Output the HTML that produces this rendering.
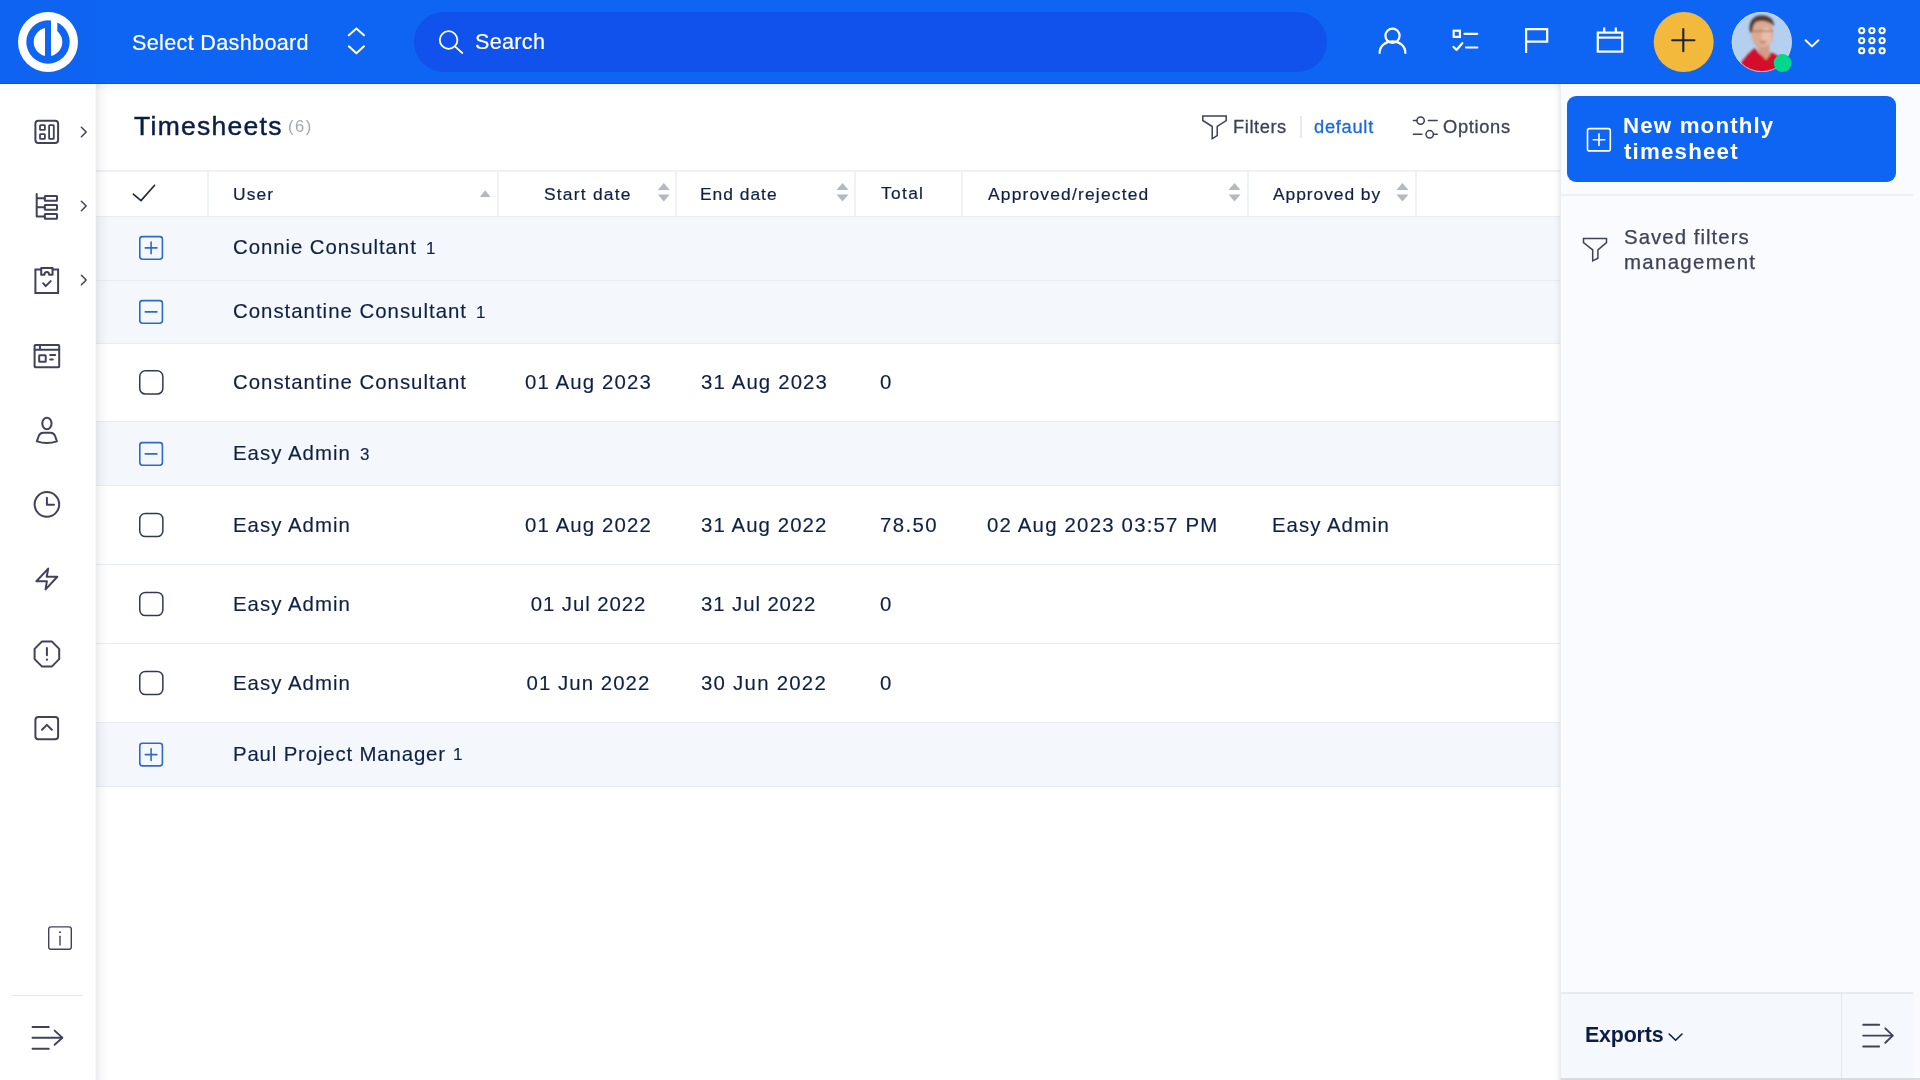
<!DOCTYPE html>
<html lang="en">
<head>
<meta charset="utf-8">
<title>Timesheets</title>
<style>
*{box-sizing:border-box;margin:0;padding:0}
html,body{width:1920px;height:1080px;overflow:hidden;background:#fff}
body{font-family:"Liberation Sans",sans-serif;color:#0e2046;position:relative}
.abs{position:absolute}
.t{position:absolute;white-space:nowrap;line-height:1;will-change:transform}
svg{position:absolute;overflow:visible}
/* header */
#top{position:absolute;left:0;top:0;width:1920px;height:84px;background:#0f65f3}
#logoarea{position:absolute;left:0;top:0;width:96px;height:84px;background:#0e63f1}
#search{position:absolute;left:414px;top:12px;width:913px;height:60px;border-radius:30px;background:#1151ec}
/* sidebar */
#side{position:absolute;left:0;top:84px;width:96px;height:996px;background:#fff}
#sideshadow{z-index:5;position:absolute;left:95px;top:84px;width:13px;height:996px;background:linear-gradient(to right,rgba(10,15,30,0),rgba(10,15,30,.075) 12%,rgba(10,15,30,.03) 45%,rgba(10,15,30,0))}
#topshadow{z-index:5;position:absolute;left:96px;top:84px;width:1464px;height:8px;background:linear-gradient(to bottom,rgba(20,30,60,.05),rgba(20,30,60,0))}
/* table */
.hl{position:absolute;left:96px;width:1464px;background:#e9edf3}
.vl{position:absolute;top:172px;height:44px;width:2px;background:#eff1f5}
.grow{position:absolute;left:96px;width:1464px;height:63px;background:#f4f8fd}
.gbox{position:absolute;left:139px;width:24px;height:24px;border:2px solid #2f73e6;border-radius:4px}
.gbox:before{content:"";position:absolute;left:4px;top:9px;width:12px;height:2px;background:#2f73e6}
.gbox.plus:after{content:"";position:absolute;left:9px;top:4px;width:2px;height:12px;background:#2f73e6}
.cbox{position:absolute;left:139px;width:24px;height:24px;border:2px solid #2c3853;border-radius:6px;background:#fff}
.cell{font-size:20.4px;letter-spacing:1.0px;color:#0e2046;-webkit-text-stroke:.15px #0e2046}
.cnt{font-size:17px;color:#0e2046;-webkit-text-stroke:.15px #0e2046}
.th{font-size:17px;letter-spacing:1.1px;color:#0e2046}
/* right panel */
#right{position:absolute;left:1561px;top:84px;width:359px;height:996px;background:#fafbfe}
#rightshadow{z-index:5;position:absolute;left:1553px;top:84px;width:8px;height:996px;background:linear-gradient(to left,rgba(20,30,60,.09),rgba(20,30,60,.02) 50%,rgba(20,30,60,0))}
#newbtn{position:absolute;left:1567px;top:96px;width:329px;height:86px;border-radius:9px;background:#0f65f3}
#exp{position:absolute;left:1561px;top:993px;width:353px;height:85px;background:#f5f8fd}
</style>
</head>
<body>
<!-- ===== HEADER ===== -->
<div id="top"></div>
<div id="logoarea"></div>
<div class="abs" style="left:0;top:83px;width:1920px;height:1px;background:rgba(5,30,150,.22)"></div>
<div id="search"></div>
<svg id="hsvg" width="1920" height="84" viewBox="0 0 1920 84" style="left:0;top:0">
<!-- logo -->
<circle cx="48" cy="42" r="30" fill="#fff"/>
<circle cx="48" cy="42" r="21.7" fill="#0f65f3"/>
<circle cx="48" cy="42" r="14.3" fill="#fff"/>
<rect x="45" y="21" width="6" height="42" fill="#0f65f3"/>
<rect x="51" y="19" width="6.3" height="12.5" fill="#fff"/>
<!-- dashboard chevrons -->
<g fill="none" stroke="#fff" stroke-width="2" stroke-linecap="round" stroke-linejoin="round">
<path d="M348.8 35.3 L356.4 28.6 L364 35.3"/>
<path d="M348.8 46.3 L356.4 53.2 L364 46.3"/>
<!-- search icon -->
<circle cx="448.6" cy="40" r="8.8" stroke-width="1.8"/>
<path d="M455.2 46.6 L462.3 53" stroke-width="1.8"/>
<!-- user -->
<circle cx="1392.5" cy="35.8" r="7.1" stroke-width="2.2"/>
<path d="M1379.6 53 C1379.6 37.5 1405.4 37.5 1405.4 53" stroke-width="2.2"/>
<!-- task list -->
<g stroke-width="2.2">
<rect x="1453.7" y="30.7" width="6.2" height="6.2" stroke-linejoin="miter"/>
<path d="M1464.5 33.8 H1477.3"/>
<path d="M1453.5 47 L1456.7 49.8 L1462.3 43.2"/>
<path d="M1466 47.5 H1477.3"/>
</g>
<!-- flag -->
<path d="M1526.1 53 V29.1 H1547.2 V41.6 H1526.1" stroke-width="2.2" stroke-linejoin="miter" stroke-linecap="butt"/>
<!-- calendar -->
<g stroke-width="2.2" stroke-linejoin="miter" stroke-linecap="butt">
<rect x="1597.8" y="32.6" width="24.4" height="19"/>
<path d="M1597.8 37.6 H1622.2"/>
<path d="M1604.2 27.5 V32.6 M1615.8 27.5 V32.6"/>
</g>
<!-- user chevron -->
<path d="M1805.6 40.2 L1812 46.4 L1818.4 40.2" stroke-width="2"/>
</g>
<!-- plus button -->
<circle cx="1683.7" cy="42" r="30" fill="#f3b93c"/>
<path d="M1672.2 40.2 H1694.4 M1683.3 29.1 V51.3" stroke="#1c2433" stroke-width="2.1" stroke-linecap="round" fill="none"/>
<!-- avatar -->
<defs>
<clipPath id="avc"><circle cx="1761.8" cy="42" r="30"/></clipPath>
<filter id="bl" x="-20%" y="-20%" width="140%" height="140%"><feGaussianBlur stdDeviation="1.1"/></filter>
</defs>
<g clip-path="url(#avc)">
<rect x="1731" y="11" width="62" height="62" fill="#b5cfee"/>
<g filter="url(#bl)">
<path d="M1738 70 C1741 60 1749 53 1754.5 48 L1760 54 L1766 58 L1771 52.5 C1776 54 1781 57 1786 63 L1786 78 L1738 78 Z" fill="#d3112b"/>
<path d="M1756 44 L1769 45 L1770 55 L1766 60 L1759 52 Z" fill="#d49b86"/>
<ellipse cx="1762.2" cy="33.4" rx="11" ry="14.6" fill="#dba892"/>
<ellipse cx="1766.5" cy="36" rx="5" ry="9" fill="#ecc4b3" opacity=".75"/>
<path d="M1750 32.5 C1747.5 21 1754 15 1762 15.2 C1770 15.4 1774.3 20 1774.2 26.5 C1770 21.5 1762 20 1756.5 21.8 C1753.2 24 1752.6 28 1752.2 32.5 Z" fill="#4f3e37"/>
<path d="M1753 31.2 H1773" stroke="#8a6253" stroke-width="1.2" fill="none" opacity=".8"/>
<ellipse cx="1763.5" cy="41.8" rx="3.4" ry="1.1" fill="#c9796d"/>
</g>
</g>
<circle cx="1761.8" cy="42" r="29.6" fill="none" stroke="#c9ddf6" stroke-width=".8"/>
<circle cx="1782.6" cy="63" r="8.9" fill="#04d78c"/>
<!-- app grid -->
<g fill="none" stroke="#fff" stroke-width="2.1">
<circle cx="1861.7" cy="30.6" r="2.6"/><circle cx="1871.9" cy="30.6" r="2.6"/><circle cx="1882.1" cy="30.6" r="2.6"/>
<circle cx="1861.7" cy="40.6" r="2.6"/><circle cx="1871.9" cy="40.6" r="2.6"/><circle cx="1882.1" cy="40.6" r="2.6"/>
<circle cx="1861.7" cy="50.7" r="2.6"/><circle cx="1871.9" cy="50.7" r="2.6"/><circle cx="1882.1" cy="50.7" r="2.6"/>
</g>
</svg>
<div class="t" style="left:132.3px;top:31.72px;font-size:21.6px;letter-spacing:0.33px;color:#fff;-webkit-text-stroke:.2px #fff">Select Dashboard</div>
<div class="t" style="left:474.5px;top:31.32px;font-size:21.6px;letter-spacing:0.3px;color:#fff;-webkit-text-stroke:.2px #fff">Search</div>
<!-- ===== SIDEBAR ===== -->
<div id="side"></div>
<div id="sideshadow"></div>
<div id="topshadow"></div>
<svg id="ssvg" width="96" height="996" viewBox="0 84 96 996" style="left:0;top:84px">
<g fill="none" stroke="#41415c" stroke-width="2" stroke-linecap="round" stroke-linejoin="round">
<!-- dashboard -->
<rect x="35.4" y="120.8" width="22.7" height="22.2" rx="3"/>
<rect x="40" y="125.1" width="4.9" height="4.7" rx=".6" stroke-width="1.8"/>
<rect x="40" y="134.2" width="4.9" height="4.7" rx=".6" stroke-width="1.8"/>
<rect x="49.1" y="125.1" width="4.7" height="13.8" rx=".6" stroke-width="1.8"/>
<!-- tree -->
<path d="M36.7 194.1 V216.4 H44.8 M36.7 198.2 H44.8 M36.7 207.3 H44.8"/>
<rect x="44.8" y="196.1" width="12.2" height="4.7" rx=".5"/>
<rect x="44.8" y="205" width="12.2" height="4.7" rx=".5"/>
<rect x="44.8" y="214.1" width="12.2" height="4.7" rx=".5"/>
<!-- clipboard -->
<path d="M41.2 269.6 H35.4 V293 H58.1 V269.6 H52.6" stroke-linejoin="miter"/>
<path d="M41.2 274.8 V267.9 H52.6 V274.8 H49.3 C49 270.9 44.6 270.9 44.3 274.8 Z"/>
<path d="M43.1 283.2 L45.7 286.1 L50.7 281.1"/>
<!-- window -->
<rect x="34.6" y="345" width="24.6" height="22.2" rx=".8"/>
<path d="M34.6 349.8 H59.2 M40 345 V349.8" stroke-width="1.9"/>
<rect x="39.2" y="355.2" width="6.5" height="6.5" rx=".5"/>
<path d="M50.2 355.1 H55.2 M50.2 359.6 H52.8"/>
<!-- user -->
<ellipse cx="46.9" cy="423.5" rx="4.6" ry="5.7"/>
<path d="M36.9 441.4 L38.7 436 Q39.9 432.8 43.4 432.8 L50.4 432.8 Q53.9 432.8 55.1 436 L56.9 441.4 Q46.9 444.6 36.9 441.4 Z"/>
<!-- clock -->
<circle cx="46.9" cy="504.4" r="12.3"/>
<path d="M46.9 497.8 V504.7 H54"/>
<!-- bolt -->
<path d="M48.2 568.6 L36.4 581.2 L46.9 581.2 L45.6 589.4 L57.3 576.8 L46.7 576.7 Z"/>
<!-- octagon alert -->
<path d="M41.8 641.6 H52 L59.2 648.9 V659.1 L52 666.4 H41.8 L34.6 659.1 V648.9 Z"/>
<path d="M46.9 648 V655.3"/>
<circle cx="46.9" cy="659.7" r="1.1" fill="#41415c" stroke="none"/>
<!-- caret square -->
<rect x="35.4" y="717" width="22.7" height="22.2" rx="3"/>
<path d="M42 729.8 L46.9 724.9 L51.8 729.8"/>
<!-- chevrons -->
<g stroke-width="1.5">
<path d="M81.4 127.2 L86.2 132 L81.4 136.8"/>
<path d="M81.4 201.2 L86.2 206 L81.4 210.8"/>
<path d="M81.4 275.2 L86.2 280 L81.4 284.8"/>
</g>
<!-- info -->
<rect x="48.7" y="926.9" width="22.6" height="22.4" rx="2.2" stroke-width="1.4"/>
<path d="M60 936.3 V945" stroke-width="1.4"/>
<circle cx="60" cy="932.2" r="1" fill="#41415c" stroke="none"/>
<!-- collapse arrow -->
<g stroke-width="1.85">
<path d="M32.5 1027 H48.8 M32.5 1037.7 H62 M32.5 1048.7 H48.8"/>
<path d="M54.6 1030.6 L62.4 1037.7 L54.6 1044.8"/>
</g>
</g>
<rect x="12" y="995" width="71" height="1" fill="#e4e7ee"/>
</svg>
<!-- ===== CONTENT ===== -->
<div class="t" style="left:133.7px;top:113.02px;font-size:26.5px;letter-spacing:1.28px;color:#0b1d44;-webkit-text-stroke:.45px #0b1d44">Timesheets</div>
<div class="t" style="left:288px;top:118.33px;font-size:16.5px;letter-spacing:1.5px;color:#a3a8b6">(6)</div>
<div class="t" style="left:1232.75px;top:117.61px;font-size:18.3px;letter-spacing:0.58px;color:#3d4259;-webkit-text-stroke:.3px #3d4259">Filters</div>
<div class="abs" style="left:1300px;top:116px;width:2px;height:22px;background:#e9e9ec"></div>
<div class="t" style="left:1314.2px;top:117.61px;font-size:18.3px;letter-spacing:0.72px;color:#1b68dd;-webkit-text-stroke:.3px #1b68dd">default</div>
<div class="t" style="left:1443.4px;top:117.61px;font-size:18.3px;letter-spacing:0.67px;color:#3d4259;-webkit-text-stroke:.3px #3d4259">Options</div>
<div class="hl" style="top:170px;height:2px;background:#eef0f5"></div>
<div class="hl" style="top:216px;height:1px"></div>
<div class="vl" style="left:207px"></div>
<div class="vl" style="left:496.5px"></div>
<div class="vl" style="left:675px"></div>
<div class="vl" style="left:854px"></div>
<div class="vl" style="left:960.5px"></div>
<div class="vl" style="left:1246.5px"></div>
<div class="vl" style="left:1414.5px"></div>
<div class="grow" style="top:217px"></div>
<div class="grow" style="top:281px;height:62px"></div>
<div class="grow" style="top:422px"></div>
<div class="grow" style="top:723px"></div>
<div class="hl" style="top:280px;height:1px"></div>
<div class="hl" style="top:343px;height:1px"></div>
<div class="hl" style="top:421px;height:1px"></div>
<div class="hl" style="top:485px;height:1px"></div>
<div class="hl" style="top:564px;height:1px"></div>
<div class="hl" style="top:643px;height:1px"></div>
<div class="hl" style="top:722px;height:1px"></div>
<div class="hl" style="top:786px;height:1px"></div>
<div class="t th" style="left:232.5px;top:185.77px;letter-spacing:1.08px;-webkit-text-stroke:.2px #0e2046;font-size:17.4px">User</div>
<div class="t th" style="left:543.5px;top:185.77px;letter-spacing:1.22px;-webkit-text-stroke:.2px #0e2046;font-size:17.4px">Start date</div>
<div class="t th" style="left:700px;top:185.77px;letter-spacing:1.0px;-webkit-text-stroke:.2px #0e2046;font-size:17.4px">End date</div>
<div class="t th" style="left:880.75px;top:185.27px;letter-spacing:1.31px;-webkit-text-stroke:.2px #0e2046;font-size:17.4px">Total</div>
<div class="t th" style="left:987.5px;top:185.77px;letter-spacing:1.19px;-webkit-text-stroke:.2px #0e2046;font-size:17.4px">Approved/rejected</div>
<div class="t th" style="left:1272.6px;top:185.77px;letter-spacing:0.95px;-webkit-text-stroke:.2px #0e2046;font-size:17.4px">Approved by</div>

<div class="t cell" style="left:232.8px;top:237.27px;letter-spacing:0.94px">Connie Consultant</div><div class="t cnt" style="left:426.1px;top:239.81px">1</div>

<div class="t cell" style="left:232.8px;top:301.07px;letter-spacing:1.0px">Constantine Consultant</div><div class="t cnt" style="left:475.9px;top:303.61px">1</div>

<div class="t cell" style="left:232.8px;top:443.07px;letter-spacing:1.02px">Easy Admin</div><div class="t cnt" style="left:359.7px;top:445.61px">3</div>

<div class="t cell" style="left:232.8px;top:743.87px;letter-spacing:0.84px">Paul Project Manager</div><div class="t cnt" style="left:453.1px;top:746.41px">1</div>

<div class="t cell" style="left:232.8px;top:372.37px;letter-spacing:1.0px">Constantine Consultant</div>
<div class="t cell" style="left:498.5px;width:179px;text-align:center;top:372.37px;letter-spacing:1.14px">01 Aug 2023</div>
<div class="t cell" style="left:701.3px;top:372.37px;letter-spacing:1.14px">31 Aug 2023</div>
<div class="t cell" style="left:879.5px;top:372.37px">0</div>

<div class="t cell" style="left:232.8px;top:514.97px;letter-spacing:1.02px">Easy Admin</div>
<div class="t cell" style="left:498.5px;width:179px;text-align:center;top:514.97px;letter-spacing:1.12px">01 Aug 2022</div>
<div class="t cell" style="left:701.3px;top:514.97px;letter-spacing:1.08px">31 Aug 2022</div>
<div class="t cell" style="left:879.5px;top:514.97px;letter-spacing:1.4px">78.50</div>
<div class="t cell" style="left:986.6px;top:514.97px;letter-spacing:1.2px">02 Aug 2023 03:57 PM</div>
<div class="t cell" style="left:1271.5px;top:514.97px;letter-spacing:1.02px">Easy Admin</div>

<div class="t cell" style="left:232.8px;top:593.97px;letter-spacing:1.02px">Easy Admin</div>
<div class="t cell" style="left:498.5px;width:179px;text-align:center;top:593.97px;letter-spacing:0.9px">01 Jul 2022</div>
<div class="t cell" style="left:701.3px;top:593.97px;letter-spacing:0.9px">31 Jul 2022</div>
<div class="t cell" style="left:879.5px;top:593.97px">0</div>

<div class="t cell" style="left:232.8px;top:672.97px;letter-spacing:1.02px">Easy Admin</div>
<div class="t cell" style="left:498.5px;width:179px;text-align:center;top:672.97px;letter-spacing:1.05px">01 Jun 2022</div>
<div class="t cell" style="left:701.3px;top:672.97px;letter-spacing:1.25px">30 Jun 2022</div>
<div class="t cell" style="left:879.5px;top:672.97px">0</div>
<svg id="csvg" width="1464" height="996" viewBox="96 84 1464 996" style="left:96px;top:84px">
<g fill="none" stroke="#3d4259" stroke-width="1.5" stroke-linejoin="miter">
<path d="M1202.8 115.9 H1226.2 V120.5 L1217.2 126.5 V135.6 L1212.2 138.6 V126.5 L1202.8 120.5 Z"/>
<circle cx="1420.6" cy="120.6" r="3.7"/><path d="M1413.4 120.6 H1416.9 M1428.4 120.6 H1437.2" stroke-linecap="round"/>
<circle cx="1429.7" cy="134.3" r="3.7"/><path d="M1413.4 134.3 H1421.9 M1433.4 134.3 H1437.2" stroke-linecap="round"/>
</g>
<g fill="none" stroke="#2f69cc" stroke-width="1.6" stroke-linecap="round"><rect x="139.80" y="236.60" width="22.6" height="22.6" rx="2.6"/><path d="M145.30 247.90 H156.90 M151.10 242.10 V253.70"/><rect x="139.80" y="300.60" width="22.6" height="22.6" rx="2.6"/><path d="M145.30 311.90 H156.90"/><rect x="139.80" y="442.60" width="22.6" height="22.6" rx="2.6"/><path d="M145.30 453.90 H156.90"/><rect x="139.80" y="743.30" width="22.6" height="22.6" rx="2.6"/><path d="M145.30 754.60 H156.90 M151.10 748.80 V760.40"/></g>
<g fill="#fff" stroke="#2f3a52" stroke-width="1.5"><rect x="139.75" y="370.80" width="23.1" height="23.2" rx="5.6"/><rect x="139.75" y="513.40" width="23.1" height="23.2" rx="5.6"/><rect x="139.75" y="592.40" width="23.1" height="23.2" rx="5.6"/><rect x="139.75" y="671.40" width="23.1" height="23.2" rx="5.6"/></g>
<path d="M133.3 194.2 L141 200.6 L154.6 185.3" fill="none" stroke="#1c2433" stroke-width="1.6" stroke-linecap="round" stroke-linejoin="round"/>
<g fill="#b4b8c2">
<path d="M479.8 197 L485.2 190.3 L490.6 197 Z"/>
<path d="M657.8 190 L663.8 183 L669.8 190 Z"/><path d="M657.8 194.5 L663.8 201.5 L669.8 194.5 Z"/>
<path d="M836.5 190 L842.5 183 L848.5 190 Z"/><path d="M836.5 194.5 L842.5 201.5 L848.5 194.5 Z"/>
<path d="M1228.5 190 L1234.5 183 L1240.5 190 Z"/><path d="M1228.5 194.5 L1234.5 201.5 L1240.5 194.5 Z"/>
<path d="M1396.4 190 L1402.4 183 L1408.4 190 Z"/><path d="M1396.4 194.5 L1402.4 201.5 L1408.4 194.5 Z"/>
</g>
</svg>
<!-- ===== RIGHT PANEL ===== -->
<div id="rightshadow"></div>
<div id="right"></div>
<div id="newbtn"></div>
<div class="t" style="left:1622.5px;top:114.72px;font-size:22.3px;font-weight:700;letter-spacing:1.15px;color:#fff;line-height:1">New monthly</div>
<div class="t" style="left:1623.5px;top:140.52px;font-size:22.3px;font-weight:700;letter-spacing:1.19px;color:#fff;line-height:1">timesheet</div>
<div class="abs" style="left:1561px;top:194px;width:352px;height:2px;background:#eef0f5"></div>
<div class="t" style="left:1623.7px;top:227.33px;font-size:20.4px;letter-spacing:1.04px;color:#3d4259;-webkit-text-stroke:.25px #3d4259">Saved filters</div>
<div class="t" style="left:1623.7px;top:251.53px;font-size:20.4px;letter-spacing:1.33px;color:#3d4259;-webkit-text-stroke:.25px #3d4259">management</div>
<div id="exp"></div>
<div class="abs" style="left:1561px;top:992px;width:352px;height:1.5px;background:#e6eaf1"></div>
<div class="abs" style="left:1841px;top:993px;width:1px;height:85px;background:#e3e7ef"></div>
<div class="abs" style="left:1561px;top:1078px;width:359px;height:2px;background:#d9dbde"></div>
<div class="t" style="left:1584.8px;top:1024.7px;font-size:21.4px;font-weight:700;letter-spacing:-0.17px;color:#0b1d44">Exports</div>
<svg id="rsvg" width="359" height="996" viewBox="1561 84 359 996" style="left:1561px;top:84px">
<g fill="none" stroke="#fff" stroke-width="1.6" stroke-linecap="round">
<rect x="1587.5" y="128.6" width="22.8" height="22.3" rx="2"/>
<path d="M1593.2 139.7 H1604.8 M1599 133.9 V145.5"/>
</g>
<path d="M1583.5 238.4 H1606.5 V242.6 L1597.9 249.9 V258.2 L1592.7 260.8 V249.9 L1583.5 242.6 Z" fill="none" stroke="#3d4259" stroke-width="1.5"/>
<path d="M1669.2 1034 L1675.6 1040.3 L1682 1034" fill="none" stroke="#0b1d44" stroke-width="1.6" stroke-linecap="round" stroke-linejoin="round"/>
<g fill="none" stroke="#41415c" stroke-width="1.9" stroke-linecap="round" stroke-linejoin="round">
<path d="M1863.2 1024.7 H1879.2 M1863.2 1035.6 H1892.4 M1863.2 1046.5 H1879.2"/>
<path d="M1885.3 1028.4 L1892.8 1035.6 L1885.3 1042.8"/>
</g>
</svg>
</body>
</html>
